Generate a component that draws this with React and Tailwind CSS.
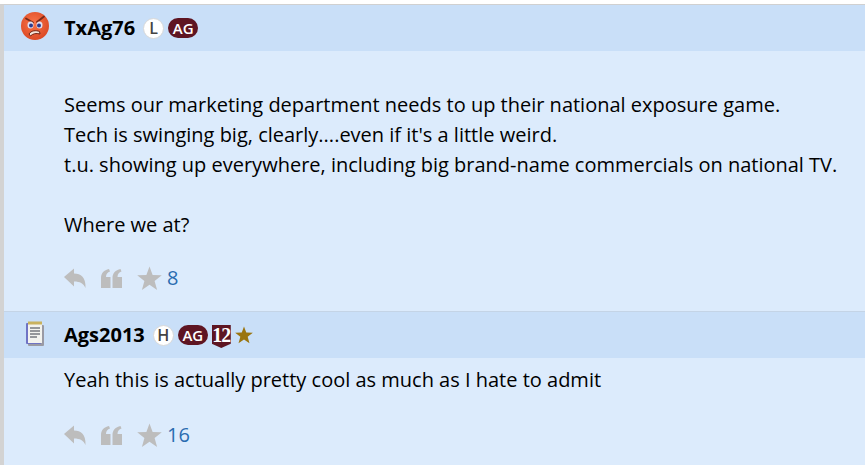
import React from "react";

const ReplyIcon = () => (
  <svg width="22" height="20" viewBox="0 0 22 20" className="shrink-0">
    <path d="M0 9 L10 0.5 L10 5.5 C17 5.5 22 9.5 21.5 20 C19.5 15.5 16 13.5 10 13.5 L10 18.5 Z" fill="#bdbdbd" />
  </svg>
);

const QuoteIcon = () => (
  <svg width="21" height="19" viewBox="0 0 21 19" className="shrink-0">
    <path d="M0 19 L0 9 C0 4 3 1 8 0 L9 2.5 C6.5 3.5 5 5 5 8 L9.5 8 L9.5 19 Z" fill="#bdbdbd" />
    <path d="M11.5 19 L11.5 9 C11.5 4 14.5 1 19.5 0 L20.5 2.5 C18 3.5 16.5 5 16.5 8 L21 8 L21 19 Z" fill="#bdbdbd" />
  </svg>
);

const StarIcon = ({ size = 25, color = "#bdbdbd" }) => (
  <svg width={size} height={size} viewBox="0 0 24 24" className="shrink-0">
    <path d="M12 0.5 L15 8.6 L23.8 8.9 L16.9 14.3 L19.3 23 L12 18 L4.7 23 L7.1 14.3 L0.2 8.9 L9 8.6 Z" fill={color} />
  </svg>
);

const AngryFace = () => (
  <svg width="28" height="28" viewBox="0 0 28 28">
    <defs>
      <radialGradient id="face" cx="45%" cy="40%" r="60%">
        <stop offset="0%" stopColor="#f9754a" />
        <stop offset="100%" stopColor="#dc4a25" />
      </radialGradient>
    </defs>
    <circle cx="14" cy="14" r="14" fill="url(#face)" />
    <path d="M5 6.5 L12 10.5 M23 4.5 L16 10" stroke="#7a2a18" strokeWidth="1.8" strokeLinecap="round" />
    <ellipse cx="9.5" cy="13" rx="3" ry="3.6" fill="#dfe0f2" />
    <ellipse cx="18.5" cy="13" rx="3" ry="3.6" fill="#dfe0f2" />
    <circle cx="10" cy="13.5" r="2" fill="#2b3a8c" />
    <circle cx="18" cy="13.5" r="2" fill="#2b3a8c" />
    <path d="M8 22 C10 18.5 15 18 18.5 19.5 L19 22 C15 21 12 21.5 9.5 24 Z" fill="#f4e4d8" stroke="#6e2414" strokeWidth="1" />
  </svg>
);

const NotepadIcon = () => (
  <svg width="18" height="25" viewBox="0 0 18 25">
    <rect x="2" y="4" width="16" height="21" rx="1" fill="#9a9aa4" />
    <rect x="0" y="2" width="15" height="21" rx="1" fill="#6f73c4" />
    <rect x="2" y="2" width="14" height="20" fill="#f3f3ee" />
    <rect x="2" y="0.5" width="14" height="3" fill="#c9b25e" />
    <path d="M4 7 H14 M4 10 H14 M4 13 H14 M4 16 H11" stroke="#77797f" strokeWidth="1.4" />
  </svg>
);

const Shield = () => (
  <span className="mt-[3px] flex h-[23px] w-[19px] items-start justify-center bg-[#5e1522] font-['Liberation_Serif',serif] text-[20px] leading-[20px] font-bold tracking-[-1px] text-white [clip-path:polygon(0_0,100%_0,100%_82%,50%_100%,0_82%)]">
    12
  </span>
);

const RoundBadge = ({ label }) => (
  <span className="flex h-[21px] w-[21px] items-center justify-center rounded-full border border-[#d8d8d8] bg-white text-[16px] font-semibold text-[#444]">
    {label}
  </span>
);

const AgBadge = () => (
  <span className="flex h-[20px] w-[30px] items-center justify-center rounded-full bg-[#5e1522] text-[15px] font-semibold text-white">
    AG
  </span>
);

const PostHeader = ({ icon, name, children }) => (
  <div className="flex h-[46px] items-center bg-[#c9dff8]">
    <div className="flex w-[60px] justify-center pb-[4px] pl-[1px]">{icon}</div>
    <span className="text-[20px] font-bold text-black">{name}</span>
    <div className="ml-[8px] flex items-center gap-[4px]">{children}</div>
  </div>
);

const Actions = ({ count }) => (
  <div className="flex h-[30px] items-center pl-[60px]">
    <ReplyIcon />
    <span className="ml-[15px]"><QuoteIcon /></span>
    <span className="ml-[15px]"><StarIcon /></span>
    <span className="ml-[5px] text-[20px] text-[#2a6cb0]">{count}</span>
  </div>
);

export default function App() {
  return (
    <div className="h-[465px] w-[865px] overflow-hidden bg-white font-['Open_Sans',sans-serif]">
      <div className="mt-[4px] h-[461px] border-t border-t-[#d0d0d0] border-l-4 border-l-[#d3d3d3] bg-[#dcebfc]">
        <PostHeader icon={<AngryFace />} name="TxAg76">
          <RoundBadge label="L" />
          <AgBadge />
        </PostHeader>
        <div className="pt-[39px] pl-[60px] text-[20px] leading-[30px] text-black">
          <p>Seems our marketing department needs to up their national exposure game.</p>
          <p>Tech is swinging big, clearly....even if it's a little weird.</p>
          <p>t.u. showing up everywhere, including big brand-name commercials on national TV.</p>
          <p className="mt-[30px]">Where we at?</p>
        </div>
        <div className="mt-[23px] h-[49px] border-b border-b-[#c4d4e6]">
          <Actions count="8" />
        </div>
        <PostHeader icon={<NotepadIcon />} name="Ags2013">
          <RoundBadge label="H" />
          <AgBadge />
          <Shield />
          <StarIcon size={18} color="#9a7510" />
        </PostHeader>
        <p className="pt-[7px] pl-[60px] text-[20px] leading-[30px] text-black">
          Yeah this is actually pretty cool as much as I hate to admit
        </p>
        <div className="mt-[25px]">
          <Actions count="16" />
        </div>
      </div>
    </div>
  );
}
